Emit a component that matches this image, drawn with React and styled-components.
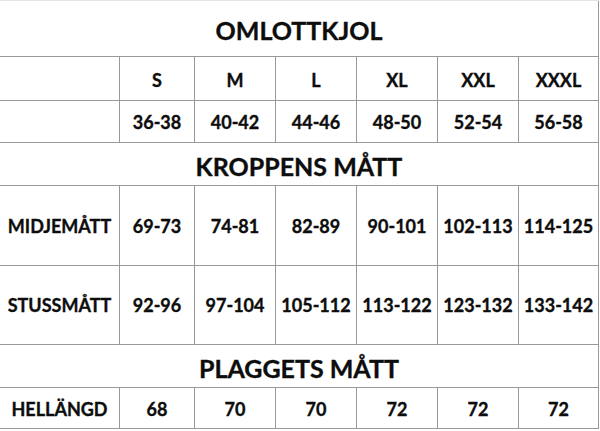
import React from "react";
import styled, {createGlobalStyle} from "styled-components";

const Global = createGlobalStyle`
    html, body {
        margin: 0;
        padding: 0;
        background: #ffffff;
    }
    body {
        font-family: Lato, "Open Sans", "Liberation Sans", sans-serif;
        color: #0d0d0d;
    }
`;

const Sheet = styled.div`
    width: 599px;
    display: grid;
    grid-template-columns: 120px 75px 81px 81px 81px 81px 80px;
    grid-template-rows: 56px 44px 42px 43px 80px 79px 43px 41px;
    border-top: 1px solid #e4e4e4;
`;

const Cell = styled.div`
    box-sizing: border-box;
    display: flex;
    align-items: center;
    justify-content: center;
    border-right: 1px solid #999999;
    border-bottom: 1px solid #999999;
    font-weight: 700;
    font-size: 18px;
    -webkit-text-stroke: 0.35px currentColor;
    white-space: nowrap;
    padding-top: ${p => p.$nudge || 0}px;
`;

const Heading = styled(Cell)`
    grid-column: 1 / -1;
    font-size: 25px;
    padding-top: 3px;
`;

const sizes = ["S", "M", "L", "XL", "XXL", "XXXL"];
const eu = ["36-38", "40-42", "44-46", "48-50", "52-54", "56-58"];

const body = [
    {label: "MIDJEMÅTT", values: ["69-73", "74-81", "82-89", "90-101", "102-113", "114-125"]},
    {label: "STUSSMÅTT", values: ["92-96", "97-104", "105-112", "113-122", "123-132", "133-142"]},
];

const garment = {label: "HELLÄNGD", values: ["68", "70", "70", "72", "72", "72"]};

function Row({label, values, nudge}) {
    return (
        <>
            <Cell $nudge={nudge}>{label}</Cell>
            {values.map((v, i) => (
                <Cell key={i} $nudge={nudge}>{v}</Cell>
            ))}
        </>
    );
}

export default function App() {
    return (
        <>
            <Global/>
            <Sheet>
                <Heading>OMLOTTKJOL</Heading>
                <Row label="" values={sizes} nudge={2}/>
                <Row label="" values={eu} nudge={1}/>
                <Heading>KROPPENS MÅTT</Heading>
                {body.map(r => (
                    <Row key={r.label} label={r.label} values={r.values}/>
                ))}
                <Heading>PLAGGETS MÅTT</Heading>
                <Row label={garment.label} values={garment.values} nudge={2}/>
            </Sheet>
        </>
    );
}
